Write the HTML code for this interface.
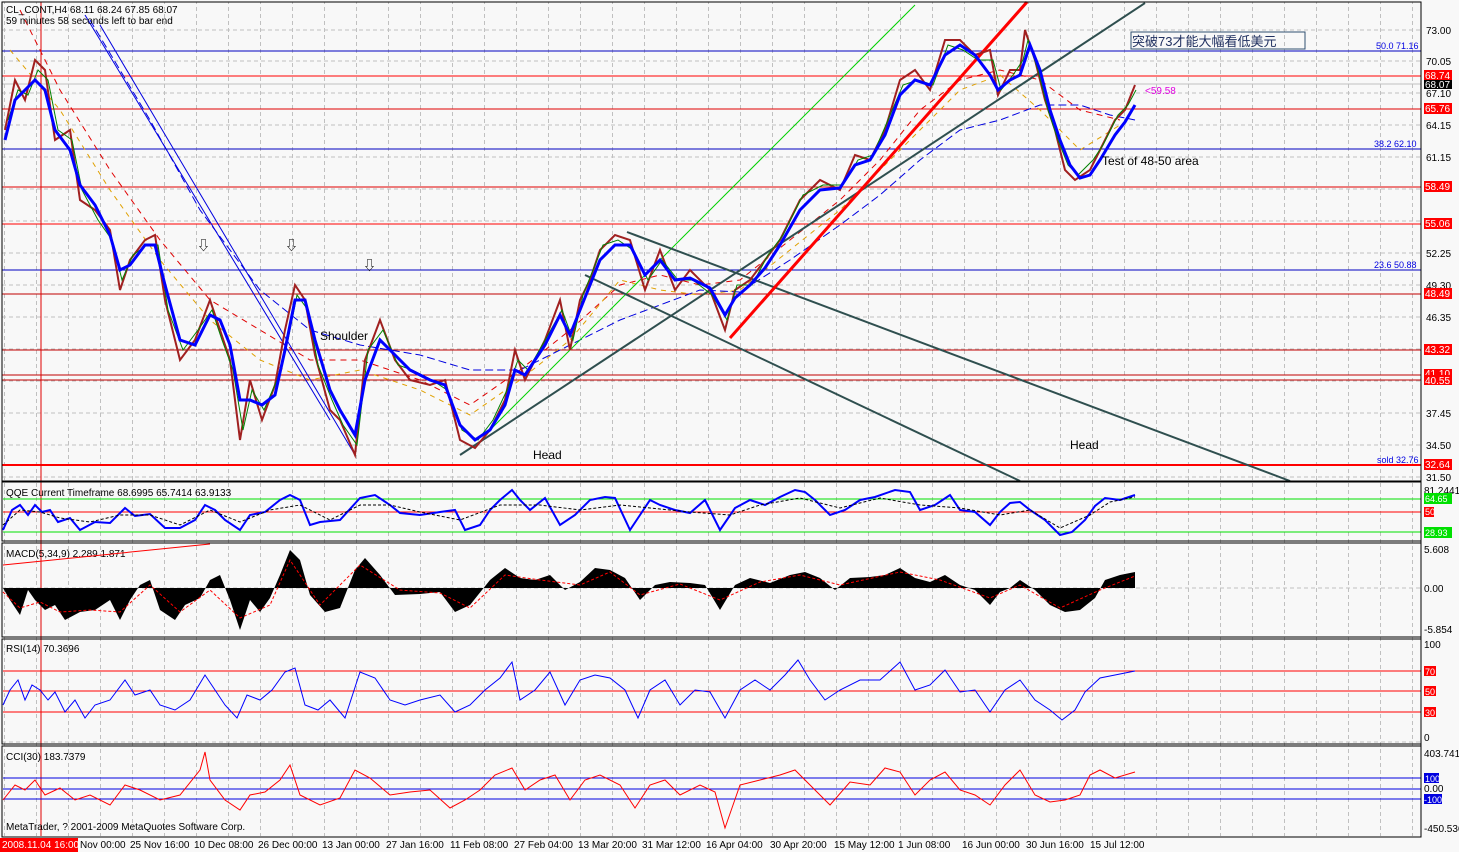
<!DOCTYPE html>
<html><head><meta charset="utf-8"><style>
html,body{margin:0;padding:0;background:#f8f8f8;}
svg{display:block;font-family:"Liberation Sans","Noto Sans CJK SC",sans-serif;}
.t{font-size:10px;fill:#000;}
.ax{font-size:10px;fill:#000;}
</style></head><body>
<svg width="1459" height="852" viewBox="0 0 1459 852" xmlns="http://www.w3.org/2000/svg">
<rect width="1459" height="852" fill="#f8f8f8"/>
<defs>
<pattern id="vg" x="4" y="0" width="32" height="852" patternUnits="userSpaceOnUse">
<line x1="0.5" y1="0" x2="0.5" y2="852" stroke="#c0c0c0" stroke-dasharray="4,3"/>
</pattern>
</defs>
<!-- vertical grid -->
<rect x="2" y="2" width="1419" height="834" fill="url(#vg)"/>
<!-- horizontal price grid -->
<g stroke="#c0c0c0" stroke-dasharray="4,3">
<line x1="2" y1="30" x2="1421" y2="30"/><line x1="2" y1="61" x2="1421" y2="61"/><line x1="2" y1="93" x2="1421" y2="93"/>
<line x1="2" y1="125" x2="1421" y2="125"/><line x1="2" y1="157" x2="1421" y2="157"/><line x1="2" y1="189" x2="1421" y2="189"/>
<line x1="2" y1="221" x2="1421" y2="221"/><line x1="2" y1="253" x2="1421" y2="253"/><line x1="2" y1="285" x2="1421" y2="285"/>
<line x1="2" y1="317" x2="1421" y2="317"/><line x1="2" y1="349" x2="1421" y2="349"/><line x1="2" y1="381" x2="1421" y2="381"/>
<line x1="2" y1="413" x2="1421" y2="413"/><line x1="2" y1="445" x2="1421" y2="445"/><line x1="2" y1="477" x2="1421" y2="477"/>
<line x1="2" y1="588" x2="1421" y2="588"/><line x1="2" y1="742" x2="1421" y2="742"/>
</g>
<!-- level lines -->
<line x1="2" y1="51" x2="1421" y2="51" stroke="#0000c0"/>
<line x1="2" y1="76" x2="1421" y2="76" stroke="#ff0000"/>
<line x1="2" y1="84" x2="1421" y2="84" stroke="#c0c0c0"/>
<line x1="2" y1="109" x2="1421" y2="109" stroke="#e00000"/>
<line x1="2" y1="149" x2="1421" y2="149" stroke="#0000c0"/>
<line x1="2" y1="187" x2="1421" y2="187" stroke="#e00000"/>
<line x1="2" y1="224" x2="1421" y2="224" stroke="#ff0000"/>
<line x1="2" y1="270" x2="1421" y2="270" stroke="#0000c0"/>
<line x1="2" y1="294" x2="1421" y2="294" stroke="#c00000"/>
<line x1="2" y1="350" x2="1421" y2="350" stroke="#c00000"/>
<line x1="2" y1="375" x2="1421" y2="375" stroke="#c00000"/>
<line x1="2" y1="380" x2="1421" y2="380" stroke="#c00000"/>
<line x1="2" y1="465" x2="1421" y2="465" stroke="#ff0000" stroke-width="2"/>
<line x1="41" y1="2" x2="41" y2="836" stroke="#e00000"/>
<!-- MAs -->
<polyline fill="none" stroke="#e00000" stroke-dasharray="6,5" points="20,10 60,90 110,170 160,240 210,300 260,330 310,360 360,360 420,380 470,405 520,370 570,330 620,285 660,275 700,285 740,280 790,240 840,200 880,160 920,110 960,80 1000,70 1040,80 1080,110 1120,120"/>
<polyline fill="none" stroke="#e0a000" stroke-dasharray="5,5" points="10,50 60,110 110,190 160,260 210,320 260,360 310,380 360,370 420,390 470,415 520,380 570,340 620,280 660,290 700,295 740,290 790,250 840,210 880,170 920,130 960,90 1000,75 1040,110 1080,150 1120,125"/>
<polyline fill="none" stroke="#0000e0" stroke-dasharray="8,4" points="90,20 150,120 200,210 260,290 310,330 360,345 420,355 470,370 520,370 570,345 620,320 660,305 700,290 740,292 790,260 840,225 880,195 920,160 960,130 1000,120 1040,105 1080,105 1110,115 1135,120"/>
<!-- trend lines -->
<line x1="85" y1="15" x2="330" y2="420" stroke="#0000e0"/>
<line x1="100" y1="25" x2="355" y2="455" stroke="#0000e0"/>
<line x1="490" y1="430" x2="915" y2="5" stroke="#00d000"/>
<line x1="460" y1="455" x2="1145" y2="3" stroke="#2f4f4f" stroke-width="2"/>
<line x1="627" y1="232" x2="1290" y2="481" stroke="#2f4f4f" stroke-width="2"/>
<line x1="585" y1="275" x2="1020" y2="481" stroke="#2f4f4f" stroke-width="2"/>
<line x1="730" y1="338" x2="1027" y2="2" stroke="#ff0000" stroke-width="3"/>
<!-- price -->
<polyline fill="none" stroke="#a02020" stroke-width="2" points="5,130 15,80 25,100 35,60 45,70 55,140 70,130 80,200 95,210 110,230 120,290 130,260 145,240 155,235 165,300 180,360 195,340 210,300 220,330 230,360 240,440 250,380 262,420 275,385 285,330 295,285 305,300 315,355 330,410 340,420 355,455 365,360 380,320 395,360 410,380 430,385 445,380 460,440 475,448 490,430 505,400 515,350 525,380 545,340 560,300 570,350 580,300 590,280 600,250 615,235 630,240 645,290 660,250 675,290 690,270 710,290 725,330 735,290 750,280 765,260 780,240 800,200 820,180 840,190 855,155 870,160 885,130 900,80 915,70 930,90 945,40 960,40 975,55 990,50 998,95 1010,70 1020,70 1025,30 1035,60 1045,100 1055,130 1065,170 1075,180 1090,170 1100,150 1115,120 1125,110 1135,85"/>
<polyline fill="none" stroke="#008000" stroke-width="1" points="8,120 18,90 28,95 38,70 48,80 58,130 72,140 82,190 98,220 112,240 122,280 133,255 147,245 158,245 168,310 183,350 198,330 212,310 222,340 233,370 243,430 252,390 264,410 277,380 288,340 297,295 308,310 318,365 332,400 343,425 357,445 368,350 383,330 398,365 412,370 432,380 447,390 462,430 478,440 493,420 507,390 518,360 528,370 548,335 562,310 573,340 583,295 593,270 603,245 618,240 633,250 648,280 662,260 678,280 693,280 712,295 727,320 737,285 752,285 768,255 783,235 803,195 823,185 843,185 858,160 873,155 888,120 903,85 918,80 933,85 948,45 963,50 978,60 993,60 1001,90 1013,75 1023,60 1028,40 1038,70 1048,110 1058,140 1068,165 1078,175 1093,160 1103,145 1118,115 1128,105 1136,90"/>
<polyline fill="none" stroke="#0000ff" stroke-width="3" points="5,140 15,100 25,90 35,80 45,90 55,130 70,150 80,185 95,205 110,235 120,270 130,265 145,245 155,245 165,285 180,340 195,345 210,315 220,320 230,345 240,400 250,400 262,405 275,395 285,350 295,300 305,300 315,340 330,390 340,410 355,435 365,380 380,340 395,355 410,370 430,380 445,385 460,425 475,440 490,430 505,405 515,370 525,375 545,345 560,315 570,335 580,310 590,285 600,260 615,245 630,245 645,275 660,260 675,280 690,278 710,288 725,315 735,298 750,285 765,268 780,245 800,210 820,190 840,188 855,165 870,160 885,135 900,95 915,80 930,85 945,55 960,45 975,55 990,75 998,90 1010,80 1020,75 1030,45 1040,70 1050,110 1060,140 1070,165 1080,178 1090,175 1100,160 1115,135 1125,122 1135,105"/>
<!-- labels -->
<text x="6" y="13" class="t">CL_CONT,H4  68.11 68.24 67.85 68.07</text>
<text x="6" y="24" class="t">59 minutes 58 seconds left to bar end</text>
<text x="320" y="340" font-size="12">Shoulder</text>
<text x="533" y="459" font-size="12">Head</text>
<text x="1070" y="449" font-size="12">Head</text>
<text x="1102" y="165" font-size="12">Test of 48-50 area</text>
<rect x="1131" y="32" width="174" height="17" fill="none" stroke="#2f4f6f"/>
<text x="1132" y="46" font-size="13" fill="#203060">突破73才能大幅看低美元</text>
<text x="1145" y="94" font-size="10" fill="#e000e0">&lt;59.58</text>
<text x="197" y="250" font-size="13">⇩</text><text x="285" y="250" font-size="13">⇩</text><text x="363" y="270" font-size="13">⇩</text>
<text x="1376" y="49" font-size="9" fill="#0000e0">50.0 71.16</text>
<text x="1374" y="147" font-size="9" fill="#0000e0">38.2 62.10</text>
<text x="1374" y="268" font-size="9" fill="#0000e0">23.6 50.88</text>
<text x="1377" y="463" font-size="9" fill="#0000e0">sold 32.76</text>

<!-- QQE panel -->
<rect x="2" y="482" width="1419" height="59" fill="none" stroke="#000"/>
<line x1="3" y1="499" x2="1421" y2="499" stroke="#00e000"/>
<line x1="3" y1="512" x2="1421" y2="512" stroke="#ff0000"/>
<line x1="3" y1="532" x2="1421" y2="532" stroke="#00e000"/>
<text x="6" y="496" class="t">QQE Current Timeframe 68.6995 65.7414 63.9133</text>
<polyline fill="none" stroke="#0000ff" stroke-width="2" points="3,530 12,510 20,505 28,515 35,505 42,512 50,510 58,522 70,518 80,530 95,522 110,523 125,508 135,516 150,514 165,528 180,528 195,520 205,505 215,510 225,520 240,530 250,515 265,512 280,500 290,495 300,500 310,525 320,522 340,520 360,498 375,495 390,505 400,513 420,515 440,512 455,510 465,530 480,525 490,510 500,500 512,490 520,500 530,510 545,498 560,525 575,515 590,500 605,497 615,498 630,530 640,515 650,500 660,505 675,510 690,513 705,500 720,530 735,508 750,500 765,505 780,497 795,490 805,492 815,500 830,515 845,510 860,500 875,497 895,490 910,492 920,510 935,505 950,495 960,510 975,512 990,525 1000,512 1010,503 1020,502 1030,510 1045,520 1060,535 1072,532 1085,520 1095,506 1105,498 1120,500 1135,495"/>
<polyline fill="none" stroke="#000" stroke-dasharray="3,2" points="3,525 20,510 40,512 60,518 90,522 120,515 150,515 180,525 210,510 240,522 270,510 300,505 330,520 360,505 390,505 420,512 460,520 500,505 540,505 580,510 620,505 650,508 690,512 730,515 760,505 800,498 840,508 880,498 920,505 960,508 1000,515 1030,510 1060,528 1090,515 1110,502 1135,497"/>
<text x="1424" y="494" font-size="10">81.2441</text>
<rect x="1424" y="493" width="28" height="11" fill="#00e000"/><text x="1425" y="502" font-size="9" fill="#fff">64.65</text>
<rect x="1424" y="507" width="10" height="10" fill="#ff0000"/><text x="1425" y="515" font-size="9" fill="#fff">50</text>
<rect x="1424" y="527" width="28" height="11" fill="#00e000"/><text x="1425" y="536" font-size="9" fill="#fff">28.93</text>

<!-- MACD panel -->
<rect x="2" y="543" width="1419" height="94" fill="none" stroke="#000"/>
<text x="6" y="557" class="t">MACD(5,34,9) 2.289 1.871</text>
<line x1="3" y1="565" x2="210" y2="544" stroke="#ff0000"/>
<path fill="#000" d="M3,588 L10,600 L20,615 L28,590 L35,600 L45,610 L55,605 L65,620 L80,612 L95,610 L110,600 L120,620 L130,600 L140,585 L150,580 L160,610 L175,620 L185,605 L200,598 L210,580 L220,575 L230,600 L240,630 L250,600 L260,612 L270,598 L280,575 L290,550 L300,560 L310,595 L325,612 L340,608 L355,570 L365,558 L380,575 L395,595 L420,594 L440,592 L455,612 L470,605 L490,580 L505,568 L520,578 L535,580 L550,575 L565,590 L580,582 L595,568 L610,570 L625,578 L640,600 L655,585 L670,582 L690,583 L705,585 L720,610 L735,585 L750,578 L770,583 L790,575 L805,572 L820,578 L835,590 L850,578 L870,577 L885,575 L900,568 L915,578 L930,582 L945,575 L960,585 L975,590 L990,605 L1000,592 L1010,588 L1020,580 L1035,590 L1050,605 L1065,612 L1080,610 L1095,598 L1105,580 L1120,575 L1135,572 L1135,588 Z"/>
<polyline fill="none" stroke="#ff0000" stroke-dasharray="3,2" points="3,592 20,608 40,602 60,612 90,610 120,612 150,585 180,612 210,590 240,618 270,605 290,560 320,605 360,565 400,590 440,593 470,608 505,575 540,580 580,585 610,572 640,595 680,584 720,600 760,582 800,575 840,585 900,572 940,580 990,598 1020,585 1060,608 1100,590 1135,576"/>
<text x="1424" y="553" font-size="10">5.608</text>
<text x="1424" y="592" font-size="10">0.00</text>
<text x="1424" y="633" font-size="10">-5.854</text>

<!-- RSI panel -->
<rect x="2" y="639" width="1419" height="105" fill="none" stroke="#000"/>
<text x="6" y="652" class="t">RSI(14) 70.3696</text>
<line x1="3" y1="671" x2="1421" y2="671" stroke="#ff0000"/>
<line x1="3" y1="691" x2="1421" y2="691" stroke="#ff0000"/>
<line x1="3" y1="712" x2="1421" y2="712" stroke="#ff0000"/>
<polyline fill="none" stroke="#0000ff" points="3,705 10,690 18,680 25,700 32,685 40,690 48,700 55,692 65,712 75,700 85,718 95,705 110,700 125,680 135,695 150,690 160,705 175,710 190,700 205,675 215,690 225,705 237,718 247,695 260,700 272,690 285,672 295,668 305,705 318,710 330,700 345,718 360,672 375,678 390,700 405,705 420,700 440,695 455,712 470,705 485,690 500,678 512,662 520,700 535,690 550,672 565,705 580,680 595,675 610,678 625,690 638,718 650,690 665,680 680,705 695,690 710,692 725,718 740,690 755,680 770,690 785,675 798,660 810,680 825,700 840,690 860,680 880,680 900,662 915,690 930,685 945,670 960,692 975,690 990,712 1005,690 1020,680 1035,700 1050,710 1062,720 1075,710 1085,692 1100,678 1115,675 1135,671"/>
<text x="1424" y="648" font-size="10">100</text>
<rect x="1424" y="666" width="12" height="10" fill="#ff0000"/><text x="1425" y="675" font-size="9" fill="#fff">70</text>
<rect x="1424" y="686" width="12" height="10" fill="#ff0000"/><text x="1425" y="695" font-size="9" fill="#fff">50</text>
<rect x="1424" y="707" width="12" height="10" fill="#ff0000"/><text x="1425" y="716" font-size="9" fill="#fff">30</text>
<text x="1424" y="741" font-size="10">0</text>

<!-- CCI panel -->
<rect x="2" y="746" width="1419" height="91" fill="none" stroke="#000"/>
<text x="6" y="760" class="t">CCI(30) 183.7379</text>
<line x1="3" y1="778" x2="1421" y2="778" stroke="#0000e0"/>
<line x1="3" y1="789" x2="1421" y2="789" stroke="#0000e0"/>
<line x1="3" y1="799" x2="1421" y2="799" stroke="#0000e0"/>
<polyline fill="none" stroke="#ff0000" points="3,800 15,785 25,790 35,780 45,795 60,788 75,800 90,795 110,805 125,785 140,790 160,800 180,795 200,770 205,752 210,780 225,800 240,810 250,795 265,792 280,780 290,765 300,795 320,805 340,798 355,770 370,778 390,795 410,792 430,790 450,808 465,800 480,790 495,775 512,768 525,790 540,780 555,775 570,800 585,780 600,775 620,785 635,808 650,785 665,780 680,795 700,785 715,792 725,828 740,785 760,780 780,775 795,770 810,785 830,805 850,782 870,785 885,768 900,772 915,795 930,780 945,772 960,790 975,795 990,805 1005,785 1020,770 1035,795 1050,802 1065,800 1080,795 1090,775 1100,770 1115,778 1135,772"/>
<text x="1424" y="757" font-size="10">403.741</text>
<rect x="1424" y="773" width="15" height="10" fill="#0000e0"/><text x="1425" y="782" font-size="9" fill="#fff">100</text>
<text x="1424" y="792" font-size="10">0.00</text>
<rect x="1424" y="794" width="18" height="10" fill="#0000e0"/><text x="1424" y="803" font-size="9" fill="#fff">-100</text>
<text x="1424" y="832" font-size="10">-450.536</text>
<text x="6" y="830" class="t">MetaTrader, ? 2001-2009 MetaQuotes Software Corp.</text>

<!-- main border + axes -->
<rect x="2" y="2" width="1419" height="479" fill="none" stroke="#000"/>
<line x1="1421" y1="2" x2="1421" y2="837" stroke="#000"/>
<g font-size="10">
<text x="1426" y="34">73.00</text><text x="1426" y="65">70.05</text><text x="1426" y="97">67.10</text>
<text x="1426" y="129">64.15</text><text x="1426" y="161">61.15</text><text x="1426" y="257">52.25</text>
<text x="1426" y="289">49.30</text><text x="1426" y="321">46.35</text><text x="1426" y="417">37.45</text>
<text x="1426" y="449">34.50</text><text x="1426" y="481">31.50</text>
</g>
<g font-size="10" fill="#fff">
<rect x="1424" y="70" width="28" height="11" fill="#ff0000"/><text x="1425" y="79">68.74</text>
<rect x="1424" y="80" width="28" height="9" fill="#000"/><text x="1425" y="88">68.07</text>
<rect x="1424" y="103" width="28" height="11" fill="#ff0000"/><text x="1425" y="112">65.76</text>
<rect x="1424" y="181" width="28" height="11" fill="#ff0000"/><text x="1425" y="190">58.49</text>
<rect x="1424" y="218" width="28" height="11" fill="#ff0000"/><text x="1425" y="227">55.06</text>
<rect x="1424" y="288" width="28" height="11" fill="#ff0000"/><text x="1425" y="297">48.49</text>
<rect x="1424" y="344" width="28" height="11" fill="#ff0000"/><text x="1425" y="353">43.32</text>
<rect x="1424" y="369" width="28" height="9" fill="#ff0000"/><text x="1425" y="377">41.10</text>
<rect x="1424" y="375" width="28" height="10" fill="#ff0000"/><text x="1425" y="384">40.55</text>
<rect x="1424" y="459" width="28" height="11" fill="#ff0000"/><text x="1425" y="468">32.64</text>
</g>
<!-- time axis -->
<rect x="0" y="838" width="78" height="14" fill="#ff0000"/>
<g font-size="10">
<text x="2" y="848" fill="#fff">2008.11.04 16:00</text>
<text x="80" y="848">Nov 00:00</text><text x="130" y="848">25 Nov 16:00</text><text x="194" y="848">10 Dec 08:00</text>
<text x="258" y="848">26 Dec 00:00</text><text x="322" y="848">13 Jan 00:00</text><text x="386" y="848">27 Jan 16:00</text>
<text x="450" y="848">11 Feb 08:00</text><text x="514" y="848">27 Feb 04:00</text><text x="578" y="848">13 Mar 20:00</text>
<text x="642" y="848">31 Mar 12:00</text><text x="706" y="848">16 Apr 04:00</text><text x="770" y="848">30 Apr 20:00</text>
<text x="834" y="848">15 May 12:00</text><text x="898" y="848">1 Jun 08:00</text><text x="962" y="848">16 Jun 00:00</text>
<text x="1026" y="848">30 Jun 16:00</text><text x="1090" y="848">15 Jul 12:00</text>
</g>
</svg>
</body></html>
